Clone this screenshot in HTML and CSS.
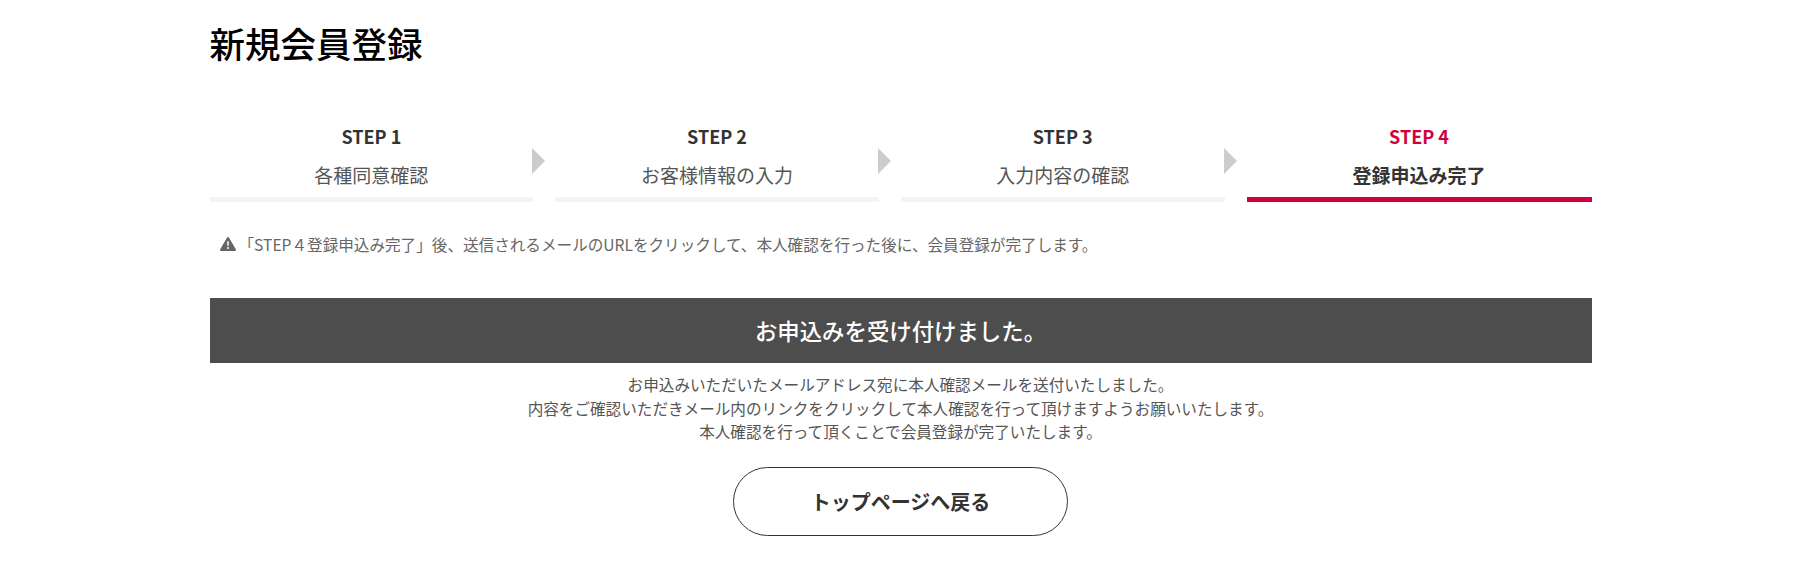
FILE: index.html
```html
<!DOCTYPE html>
<html lang="ja">
<head>
    <meta charset="UTF-8">
    <meta name="viewport" content="width=device-width, initial-scale=1.0">
    <title>新規会員登録</title>
    <link rel="stylesheet" href="styles.css">
</head>
<body>
    <div class="container">
        <h1 class="page-title">新規会員登録</h1>
        <ol class="steps">
            <li class="step">
                <span class="step-no">STEP 1</span>
                <span class="step-name">各種同意確認</span>
            </li>
            <li class="step">
                <span class="step-no">STEP 2</span>
                <span class="step-name">お客様情報の入力</span>
            </li>
            <li class="step">
                <span class="step-no">STEP 3</span>
                <span class="step-name">入力内容の確認</span>
            </li>
            <li class="step current">
                <span class="step-no">STEP 4</span>
                <span class="step-name">登録申込み完了</span>
            </li>
        </ol>
        <p class="notice">
            <svg class="notice-icon" viewBox="0 0 512 512" aria-hidden="true"><path d="M256 32c14 0 27 8 34 20l216 368c7 12 7 27 0 40s-20 20-34 20H40c-14 0-27-8-34-20s-7-28 0-40L222 52c7-12 20-20 34-20zm0 128c-13 0-24 11-24 24v112c0 13 11 24 24 24s24-11 24-24V184c0-13-11-24-24-24zm32 224a32 32 0 1 0-64 0 32 32 0 1 0 64 0z"/></svg>
            <span>「STEP４登録申込み完了」後、送信されるメールのURLをクリックして、本人確認を行った後に、会員登録が完了します。</span>
        </p>
        <h2 class="done-title">お申込みを受け付けました。</h2>
        <p class="done-text">
            お申込みいただいたメールアドレス宛に本人確認メールを送付いたしました。<br>
            内容をご確認いただきメール内のリンクをクリックして本人確認を行って頂けますようお願いいたします。<br>
            本人確認を行って頂くことで会員登録が完了いたします。
        </p>
        <div class="btn-group">
            <a class="btn" href="#">トップページへ戻る</a>
        </div>
    </div>
</body>
</html>
```

FILE: styles.css
```css
body{
    margin: 0;
    background-color: #fff;
    color: #555;
    font-family: "Noto Sans CJK JP", "Noto Sans", sans-serif;
}
.container{
    width: 1382px;
    margin: 0 0 0 209.5px;
}
.page-title{
    margin: 0;
    padding-top: 17px;
    font-size: 35.5px;
    line-height: 52px;
    font-weight: 500;
    color: #000;
}
.steps{
    display: flex;
    list-style: none;
    margin: 54px 0 0;
    padding: 0;
}
.step{
    position: relative;
    flex: 1;
    padding-right: 22px;
    text-align: center;
}
.step::after{
    content: "";
    position: absolute;
    top: 25px;
    right: 10px;
    border-left: 13px solid #ccc;
    border-top: 13px solid transparent;
    border-bottom: 13px solid transparent;
}
.step-no{
    display: block;
    font-size: 18px;
    line-height: 26px;
    font-weight: 700;
    color: #333;
}
.step-name{
    display: block;
    margin-top: 12px;
    padding-bottom: 8px;
    border-bottom: 5px solid #f4f4f4;
    font-size: 19px;
    line-height: 28px;
}
.current{
    flex: none;
    width: 345px;
    padding-right: 0;
}
.current::after{
    display: none;
}
.current .step-no{
    color: #d2003a;
}
.current .step-name{
    border-bottom-color: #d2003a;
    font-weight: 700;
    color: #333;
}
.notice{
    display: flex;
    align-items: center;
    gap: 3px;
    margin: 30px 0 0;
    padding-left: 10px;
    font-size: 15.6px;
    line-height: 24px;
    color: #666;
}
.notice-icon{
    width: 16px;
    height: 16px;
    fill: #666;
    flex-shrink: 0;
}
.done-title{
    margin: 42px 0 0;
    background-color: #4d4d4d;
    color: #fff;
    text-align: center;
    font-size: 22.4px;
    line-height: 65px;
    font-weight: 500;
}
.done-text{
    margin: 10px 0 0;
    text-align: center;
    font-size: 15.6px;
    line-height: 23.5px;
}
.btn-group{
    margin-top: 23px;
    text-align: center;
}
.btn{
    display: inline-block;
    width: 335px;
    box-sizing: border-box;
    border: 1px solid #333;
    border-radius: 35px;
    color: #333;
    font-size: 20px;
    line-height: 67px;
    font-weight: 700;
    text-decoration: none;
}
```
